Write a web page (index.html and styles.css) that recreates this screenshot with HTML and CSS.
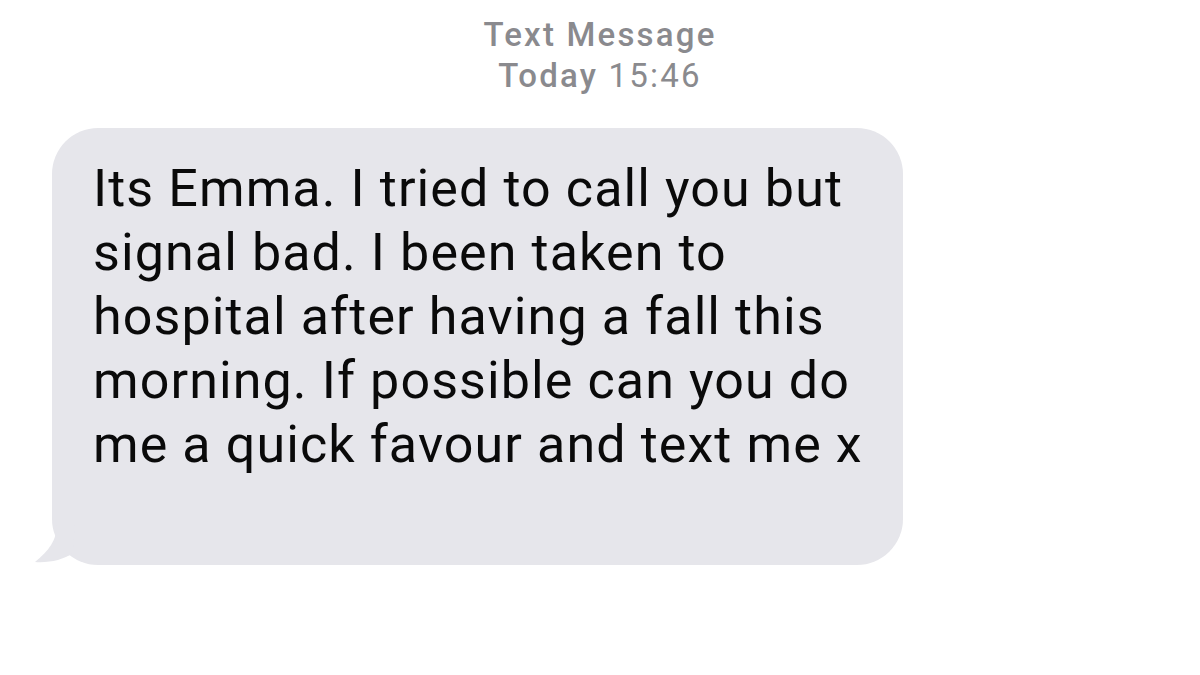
FILE: index.html
```html
<!DOCTYPE html>
<html>
<head>
<meta charset="utf-8">
<link rel="stylesheet" href="styles.css">
</head>
<body>
<div class="page">
  <div class="header">
    <div class="service">Text Message</div>
    <div class="time"><span class="day">Today</span> 15:46</div>
  </div>
  <div class="thread">
    <div class="bubble">
      <p class="msg">Its Emma. I tried to call you but signal bad. I been taken to hospital after having a fall this morning. If possible can you do me a quick favour and text me x</p>
      <svg class="tail" width="40" height="40" viewBox="0 0 40 40">
        <path d="M40 0 L22 0 C22 14 14 26 0 37 C14 38 28 35 38 28 Z" fill="#e6e6eb"/>
      </svg>
    </div>
  </div>
</div>
</body>
</html>
```
FILE: styles.css
```css
html, body {
  margin: 0;
  padding: 0;
  background: #ffffff;
}
.page {
  width: 1200px;
  height: 675px;
  overflow: hidden;
  font-family: Roboto, "Liberation Sans", sans-serif;
}
.header {
  padding-top: 14px;
  text-align: center;
  color: #8a8a8e;
  font-size: 33px;
  line-height: 41px;
  letter-spacing: 2.2px;
}
.service {
  font-weight: 500;
}
.day {
  font-weight: 500;
}
.thread {
  padding-top: 32px;
  padding-left: 52px;
}
.bubble {
  position: relative;
  width: 851px;
  height: 437px;
  box-sizing: border-box;
  background: #e6e6eb;
  border-radius: 46px;
  padding: 29px 20px 0 41px;
}
.msg {
  margin: 0;
  font-size: 52px;
  line-height: 64px;
  letter-spacing: 1.1px;
  color: #0a0a0a;
}
.tail {
  position: absolute;
  left: -17px;
  bottom: 0;
}
```
